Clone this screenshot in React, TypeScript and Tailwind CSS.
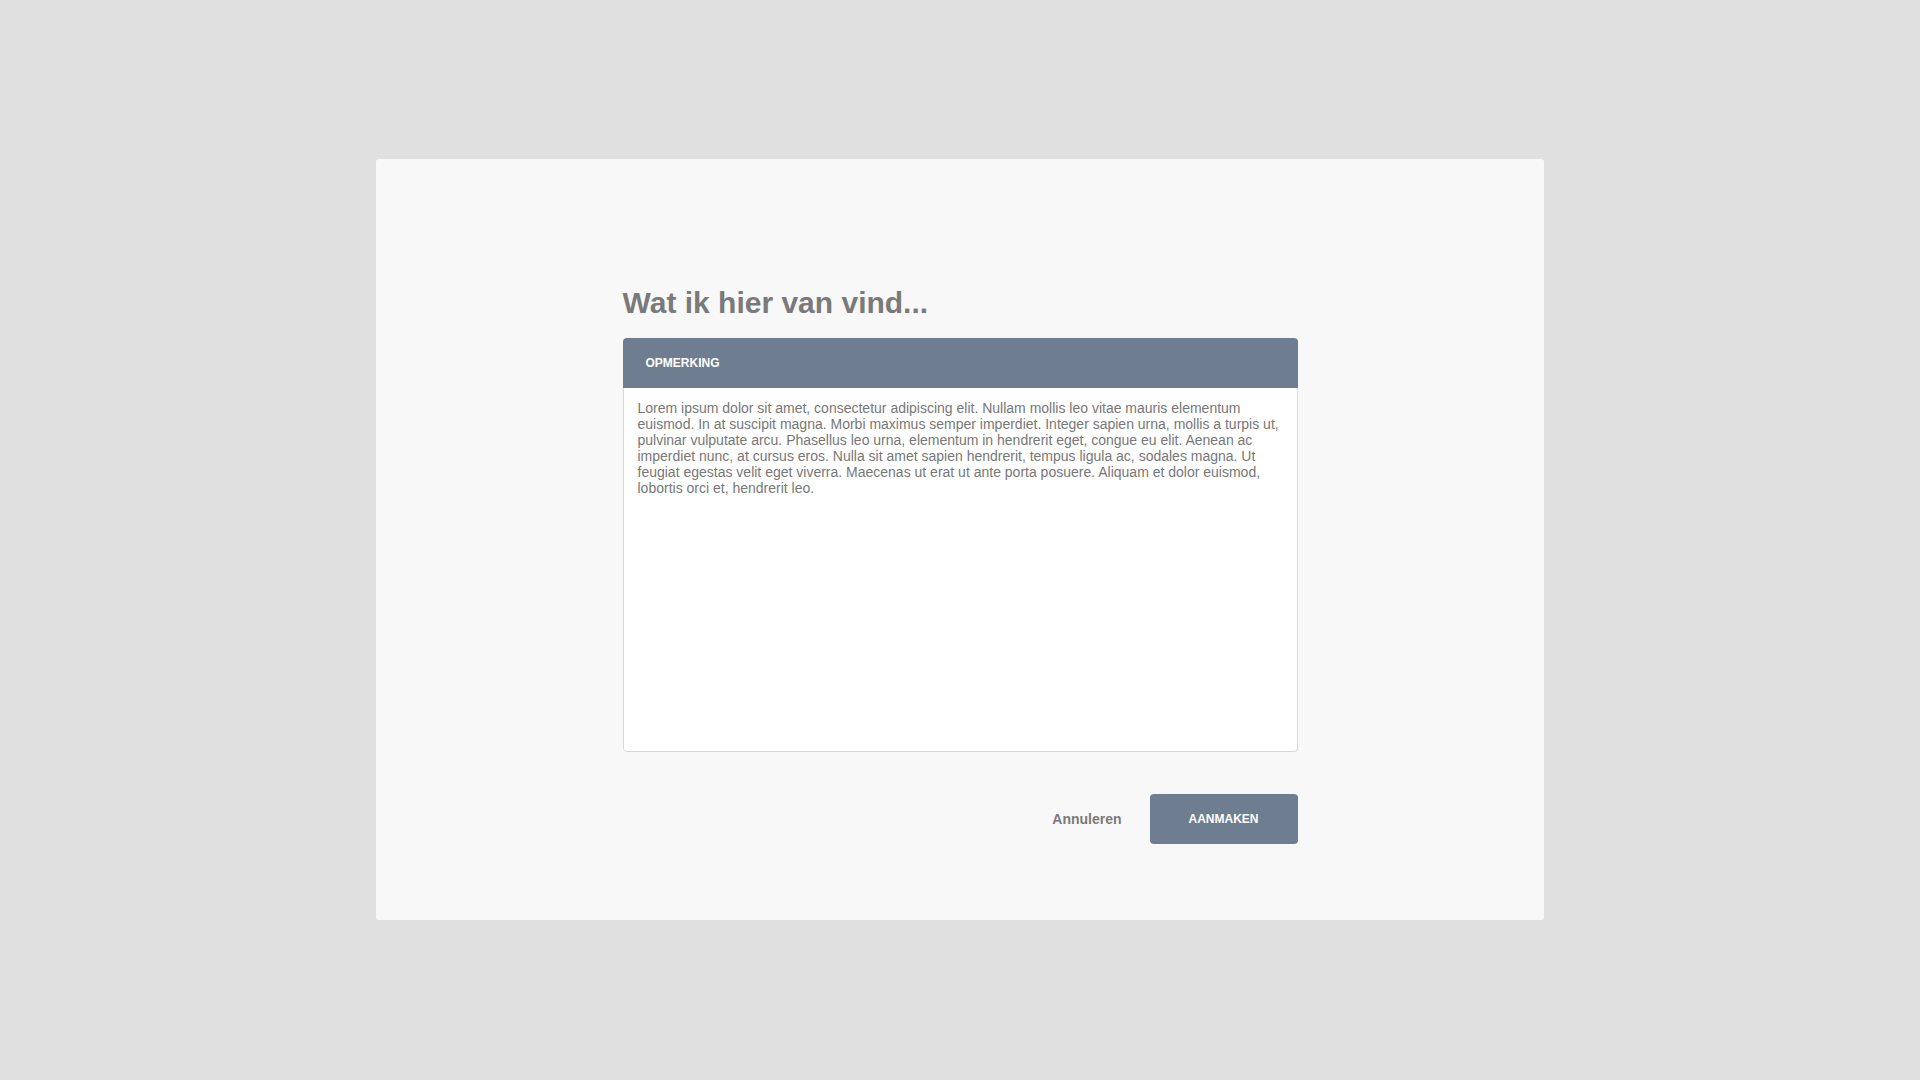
import React from "react";

export default function App() {
  const lorem =
    "Lorem ipsum dolor sit amet, consectetur adipiscing elit. Nullam mollis leo vitae mauris elementum euismod. In at suscipit magna. Morbi maximus semper imperdiet. Integer sapien urna, mollis a turpis ut, pulvinar vulputate arcu. Phasellus leo urna, elementum in hendrerit eget, congue eu elit. Aenean ac imperdiet nunc, at cursus eros. Nulla sit amet sapien hendrerit, tempus ligula ac, sodales magna. Ut feugiat egestas velit eget viverra. Maecenas ut erat ut ante porta posuere. Aliquam et dolor euismod, lobortis orci et, hendrerit leo.";
  return (
    <div
      className="w-full h-[1080px] bg-[#e0e0e0] flex justify-center pt-[159px]"
      style={{ fontFamily: '"Liberation Sans", Arial, sans-serif' }}
    >
      <div className="w-[1168px] h-[761px] bg-[#f8f8f8] rounded-[3px] flex flex-col items-center pt-[127px]">
        <div className="w-[675px] flex flex-col">
          <h1 className="text-[30px] leading-[34px] font-bold text-[#7a7a7a] mb-[18px]">
            Wat ik hier van vind...
          </h1>
          <div className="flex flex-col rounded-[4px] overflow-hidden">
            <div className="h-[50px] bg-[#6e7e90] flex items-center pl-[23px]">
              <span className="text-[12px] font-bold text-white">OPMERKING</span>
            </div>
            <div className="h-[364px] bg-white border border-t-0 border-[#d9d9d9] rounded-b-[4px] pl-[14px] pr-[16px] pt-[12px]">
              <p className="text-[14px] leading-[16px] text-[#777777]">{lorem}</p>
            </div>
          </div>
          <div className="flex justify-end items-center mt-[42px]">
            <button className="text-[14px] font-bold text-[#7a7a7a] mr-[28px]">
              Annuleren
            </button>
            <button className="w-[148px] h-[50px] bg-[#6e7e90] rounded-[4px] text-[12px] font-bold text-white">
              AANMAKEN
            </button>
          </div>
        </div>
      </div>
    </div>
  );
}
